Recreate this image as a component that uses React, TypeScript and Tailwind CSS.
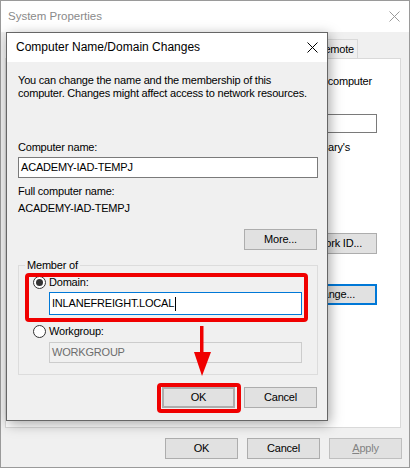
import React from "react";

interface BtnProps {
  children: React.ReactNode;
  className?: string;
}

function Btn({ children, className = "" }: BtnProps) {
  return (
    <div
      className={`flex h-[21px] w-[73px] items-center justify-center border border-[#adadad] bg-[#e1e1e1] ${className}`}
    >
      {children}
    </div>
  );
}

function Radio({ checked }: { checked?: boolean }) {
  return (
    <span className="flex h-[13px] w-[13px] shrink-0 items-center justify-center rounded-full border border-[#333333] bg-white">
      {checked && <span className="h-[7px] w-[7px] rounded-full bg-[#333333]" />}
    </span>
  );
}

function CloseX({ color }: { color: string }) {
  return (
    <svg width="11" height="11" viewBox="0 0 11 11">
      <path d="M0.5 0.5 L10.5 10.5 M10.5 0.5 L0.5 10.5" stroke={color} strokeWidth="1" />
    </svg>
  );
}

export default function App() {
  return (
    <div className="relative h-[468px] w-[410px] overflow-hidden bg-white font-['Liberation_Sans',Arial,sans-serif] text-[11px] leading-[13px] tracking-[-0.2px] text-black">
      {/* System Properties (background window) */}
      <div className="flex h-full flex-col border border-[#9a9a9a]">
        <div className="flex h-[31px] shrink-0 items-center justify-between bg-white pl-[7px] pr-[9px]">
          <span className="text-[11.5px] tracking-normal text-[#8a8a8a]">System Properties</span>
          <CloseX color="#9a9a9a" />
        </div>
        <div className="flex flex-1 flex-col bg-[#f0f0f0] pl-[4px] pr-[8px]">
          <div className="mt-[7px] flex h-[19px] justify-end pr-[43px]">
            <div className="flex items-center border border-b-0 border-[#d9d9d9] pl-[6px] pr-[3px]">Remote</div>
          </div>
          <div className="flex flex-1 flex-col items-end border border-[#d9d9d9] bg-white pr-[23px]">
            <div className="mr-[5px] mt-[16px] whitespace-nowrap">
              Windows uses the following information to identify your computer
            </div>
            <div className="h-[13px]" />
            <div className="mt-[13px] h-[19px] w-[247px] border border-[#7a7a7a] bg-white" />
            <div className="mr-[27px] mt-[8px] whitespace-nowrap">
              For example: "Kitchen Computer" or "Mary's
            </div>
            <div className="mt-[79px] flex h-[21px] w-[76px] items-center justify-end whitespace-nowrap border border-[#adadad] bg-[#e1e1e1] pr-[14px]">
              Network ID...
            </div>
            <div className="mt-[30px] flex h-[21px] w-[76px] items-center justify-end whitespace-nowrap border-2 border-[#0078d7] bg-[#e1e1e1] pr-[20px]">
              Change...
            </div>
          </div>
          <div className="mb-[8px] mr-[-1px] mt-[10px] flex justify-end gap-[9px]">
            <Btn>OK</Btn>
            <Btn>Cancel</Btn>
            <Btn className="border-[#bfbfbf] bg-[#cccccc] text-[#838383]">
              <span>
                <span className="underline">A</span>pply
              </span>
            </Btn>
          </div>
        </div>
      </div>

      {/* Computer Name/Domain Changes dialog */}
      <div className="absolute left-[6px] top-[32px] flex h-[389px] w-[322px] flex-col border border-[#666666] bg-[#f0f0f0] shadow-[2px_3px_12px_rgba(0,0,0,0.35)]">
        <div className="flex h-[29px] shrink-0 items-center justify-between bg-white pl-[9px] pr-[9px]">
          <span className="text-[12px] tracking-normal">Computer Name/Domain Changes</span>
          <CloseX color="#000000" />
        </div>
        <div className="flex flex-1 flex-col pl-[11px] pr-[9px] pt-[12px]">
          <p>
            You can change the name and the membership of this
            <br />
            computer. Changes might affect access to network resources.
          </p>
          <div className="mt-[41px]">Computer name:</div>
          <div className="mt-[3px] flex h-[21px] items-center border border-[#7a7a7a] bg-white px-[2px]">
            ACADEMY-IAD-TEMPJ
          </div>
          <div className="mt-[7px]">Full computer name:</div>
          <div className="mt-[4px]">ACADEMY-IAD-TEMPJ</div>
          <Btn className="mr-[1px] mt-[14px] self-end">More...</Btn>

          <fieldset className="mt-[9px] border border-[#dcdcdc] pb-[11px] pl-[14px] pr-[15px] pt-[4px]">
            <legend className="ml-[-8px] px-[2px]">Member of</legend>
            <div className="flex items-center gap-[3px]">
              <Radio checked />
              <span>Domain:</span>
            </div>
            <div className="ml-[16px] mt-[3px] flex h-[23px] items-center border border-[#0078d7] bg-white px-[2px]">
              INLANEFREIGHT.LOCAL
              <span className="ml-[1px] inline-block h-[14px] w-px bg-black" />
            </div>
            <div className="mt-[10px] flex items-center gap-[3px]">
              <Radio />
              <span>Workgroup:</span>
            </div>
            <div className="ml-[16px] mt-[4px] flex h-[21px] items-center border border-[#cccccc] bg-[#f0f0f0] px-[2px] text-[#6d6d6d]">
              WORKGROUP
            </div>
          </fieldset>

          <div className="mr-[1px] mt-[12px] flex justify-end gap-[9px]">
            <Btn className="border-2 border-[#0078d7]">OK</Btn>
            <Btn>Cancel</Btn>
          </div>
        </div>
      </div>

      {/* red annotations */}
      <div className="pointer-events-none absolute left-[25px] top-[273px] h-[49px] w-[283px] rounded-[4px] border-4 border-[#f00000]" />
      <div className="pointer-events-none absolute left-[157px] top-[383px] h-[30px] w-[84px] rounded-[4px] border-4 border-[#f00000]" />
      <svg className="pointer-events-none absolute left-[193px] top-[326px]" width="19" height="51" viewBox="0 0 19 51">
        <rect x="7" y="0" width="3.5" height="27" fill="#f00000" />
        <polygon points="1,26 18,26 9,50" fill="#f00000" />
      </svg>
    </div>
  );
}
